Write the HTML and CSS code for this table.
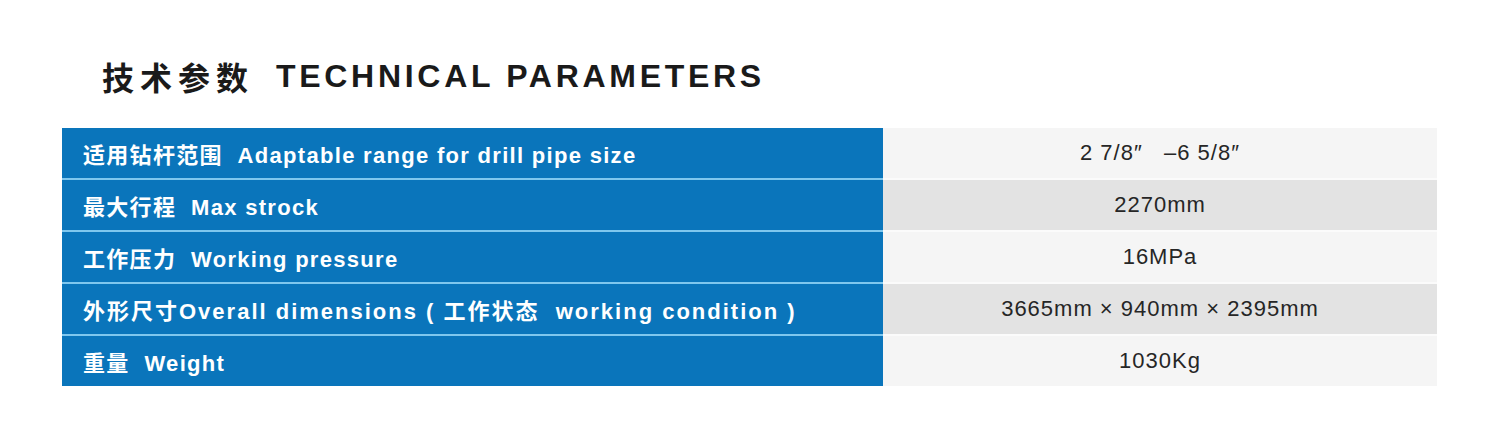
FILE: index.html
```html
<!DOCTYPE html>
<html lang="zh">
<head>
<meta charset="utf-8">
<title>技术参数 TECHNICAL PARAMETERS</title>
<link rel="stylesheet" href="styles.css">
</head>
<body>
<div class="page">
  <h1 class="title"><span class="title-cn">技术参数</span><span class="title-en">TECHNICAL PARAMETERS</span></h1>
  <div class="table">
    <div class="row odd">
      <div class="label">适用钻杆范围&nbsp; Adaptable range for drill pipe size</div>
      <div class="value">2 7/8″&nbsp;&nbsp; –6 5/8″</div>
    </div>
    <div class="row even">
      <div class="label">最大行程&nbsp; Max strock</div>
      <div class="value">2270mm</div>
    </div>
    <div class="row odd">
      <div class="label">工作压力&nbsp; Working pressure</div>
      <div class="value">16MPa</div>
    </div>
    <div class="row even">
      <div class="label label-wide">外形尺寸Overall dimensions&nbsp;( 工作状态&nbsp; working condition )</div>
      <div class="value">3665mm × 940mm × 2395mm</div>
    </div>
    <div class="row odd">
      <div class="label">重量&nbsp; Weight</div>
      <div class="value">1030Kg</div>
    </div>
  </div>
</div>
</body>
</html>
```

FILE: styles.css
```css
html, body {
  margin: 0;
  padding: 0;
  background: #ffffff;
}

.page {
  width: 1505px;
  height: 444px;
  padding: 56px 0 0 62px;
  box-sizing: border-box;
}

.title {
  margin: 0 0 32px 40px;
  height: 40px;
  line-height: 40px;
  font-family: "Liberation Sans", "Noto Sans CJK SC", sans-serif;
  font-weight: 700;
  color: #1a1a1a;
  display: flex;
  align-items: center;
  white-space: nowrap;
}

.title-cn {
  font-family: "Noto Sans CJK SC", sans-serif;
  font-size: 32px;
  letter-spacing: 6px;
  margin-right: 22px;
}

.title-en {
  font-size: 32px;
  letter-spacing: 3.7px;
}

.table {
  width: 1375px;
  display: flex;
  flex-direction: column;
}

.row {
  display: grid;
  grid-template-columns: 821px 554px;
  height: 50px;
}

.row + .row {
  height: 52px;
}

.row + .row .label {
  border-top: 2px solid #7fc7ee;
}

.row + .row .value {
  border-top: 2px solid #fbfbfb;
}

.label {
  background: #0a75bb;
  color: #ffffff;
  font-family: "Liberation Sans", "Noto Sans CJK SC", sans-serif;
  font-weight: 700;
  font-size: 22px;
  letter-spacing: 1.3px;
  padding-left: 21px;
  display: flex;
  align-items: center;
  white-space: nowrap;
}

.label-wide {
  letter-spacing: 2px;
}

.value {
  color: #262626;
  font-family: "Liberation Sans", sans-serif;
  font-size: 22px;
  letter-spacing: 1px;
  display: flex;
  align-items: center;
  justify-content: center;
  white-space: nowrap;
}

.odd .value {
  background: #f5f5f5;
}

.even .value {
  background: #e3e3e3;
}
```
